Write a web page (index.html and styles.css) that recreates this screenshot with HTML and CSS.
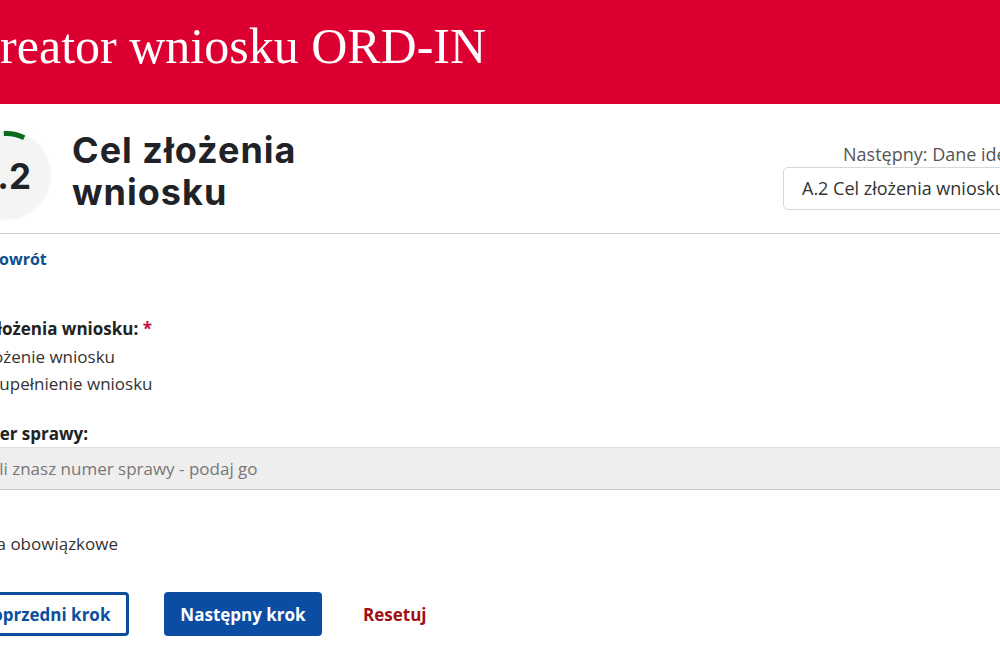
FILE: index.html
```html
<!DOCTYPE html>
<html lang="pl">
<head>
<meta charset="utf-8">
<title>Kreator wniosku ORD-IN</title>
<link rel="stylesheet" href="styles.css">
</head>
<body>
<div class="page">
  <header class="top">
    <h1 class="top-title">Kreator wniosku ORD-IN</h1>
  </header>

  <section class="step">
    <div class="badge">
      <svg class="badge-ring" width="88" height="88" viewBox="0 0 88 88" aria-hidden="true">
        <path d="M41.8 2.6 A41.5 41.5 0 0 1 62.2 6.7" fill="none" stroke="#0b6b1d" stroke-width="5"/>
      </svg>
      <span class="badge-text">A.2</span>
    </div>
    <h2 class="step-title">Cel złożenia<br>wniosku</h2>
    <div class="step-nav">
      <div class="step-next">Następny: Dane identyfikacyjne</div>
      <div class="step-select">A.2 Cel złożenia wniosku</div>
    </div>
  </section>

  <div class="back"><a class="back-link" href="#">Powrót</a></div>

  <form class="form">
    <div class="field-label">Cel złożenia wniosku: <span class="req">*</span></div>
    <label class="radio"><span class="radio-dot"></span>Złożenie wniosku</label>
    <label class="radio"><span class="radio-dot"></span>Uzupełnienie wniosku</label>

    <div class="field-label field-label-case">Numer sprawy:</div>
    <div class="input">Jeśli znasz numer sprawy - podaj go</div>

    <div class="note">* Pola obowiązkowe</div>

    <div class="actions">
      <button type="button" class="btn btn-outline">Poprzedni krok</button>
      <button type="button" class="btn btn-primary">Następny krok</button>
      <button type="button" class="btn btn-reset">Resetuj</button>
    </div>
  </form>
</div>
</body>
</html>
```

FILE: styles.css
```css
html, body {
  margin: 0;
  padding: 0;
  background: #ffffff;
}
body {
  overflow: hidden;
  font-family: "Open Sans", "Liberation Sans", sans-serif;
  color: #222;
}
.page {
  margin-left: -42px;
  width: 1142px;
}

/* header */
.top {
  background: #dc0032;
  height: 104px;
  box-sizing: border-box;
  padding: 21px 0 0 6px;
}
.top-title {
  margin: 0;
  font-family: "Liberation Serif", serif;
  font-weight: 400;
  font-size: 50px;
  line-height: 50px;
  color: #ffffff;
}

/* step header */
.step {
  display: flex;
  align-items: flex-start;
  height: 130px;
  box-sizing: border-box;
  padding-top: 27px;
  border-bottom: 1px solid #cfcfcf;
}
.badge {
  position: relative;
  width: 88px;
  height: 88px;
  margin-left: 4px;
  border-radius: 50%;
  background: #f4f4f4;
  box-shadow: 0 0 5px rgba(0, 0, 0, 0.05);
  display: flex;
  align-items: center;
  justify-content: center;
  flex: none;
}
.badge-ring {
  position: absolute;
  left: 0;
  top: 0;
}
.badge-text {
  font-family: "Inter", "Liberation Sans", sans-serif;
  font-weight: 700;
  font-size: 35px;
  color: #1f2327;
  margin-top: 2px;
  margin-right: 10px;
}
.step-title {
  margin: -2px 0 0 22px;
  font-family: "Inter", "Liberation Sans", sans-serif;
  font-weight: 700;
  font-size: 36px;
  letter-spacing: 1px;
  line-height: 42px;
  color: #1f2327;
}
.step-nav {
  margin-left: auto;
  margin-top: 12px;
  width: 317px;
}
.step-next {
  padding-left: 60px;
  font-size: 18px;
  line-height: 22px;
  color: #555;
  white-space: nowrap;
}
.step-select {
  margin-top: 2px;
  height: 43px;
  box-sizing: border-box;
  border: 1px solid #d8d8d8;
  border-radius: 5px;
  padding-left: 18px;
  font-size: 18px;
  line-height: 41px;
  color: #333;
  white-space: nowrap;
}

/* back link */
.back {
  margin-top: 15px;
  padding-left: 31px;
  line-height: 20px;
}
.back-link {
  font-size: 16px;
  font-weight: 700;
  color: #0b4f8f;
  text-decoration: none;
}

/* form */
.form {
  margin: 49px 0 0 0;
}
.field-label {
  font-size: 17px;
  font-weight: 700;
  line-height: 22px;
  color: #222;
  margin-bottom: 3px;
}
.req {
  color: #c4103a;
}
.radio {
  display: flex;
  align-items: center;
  height: 27px;
  font-size: 17px;
  color: #333;
}
.radio-dot {
  width: 16px;
  height: 16px;
  box-sizing: border-box;
  border: 1px solid #888;
  border-radius: 50%;
  margin-right: 5px;
}
.field-label-case {
  margin-top: 26px;
  margin-bottom: 2px;
}
.input {
  height: 43px;
  box-sizing: border-box;
  background: #eeeeee;
  border-top: 1px solid #e0e0e0;
  border-bottom: 1px solid #c9c9c9;
  padding-left: 19px;
  font-size: 17px;
  line-height: 41px;
  color: #777;
}
.note {
  margin-top: 43px;
  font-size: 17px;
  line-height: 22px;
  color: #333;
}

/* buttons */
.actions {
  display: flex;
  align-items: center;
  margin-top: 37px;
  margin-left: 5px;
}
.btn {
  height: 44px;
  box-sizing: border-box;
  font-family: "Open Sans", "Liberation Sans", sans-serif;
  font-weight: 700;
  font-size: 17px;
  border-radius: 4px;
  cursor: pointer;
  white-space: nowrap;
}
.btn-outline {
  width: 166px;
  background: #ffffff;
  border: 3px solid #0b4f9c;
  color: #0b4f9c;
}
.btn-primary {
  width: 158px;
  margin-left: 35px;
  background: #0b4da2;
  border: none;
  color: #ffffff;
}
.btn-reset {
  margin-left: 30px;
  padding: 0 11px;
  background: none;
  border: none;
  color: #a00f14;
}
```
